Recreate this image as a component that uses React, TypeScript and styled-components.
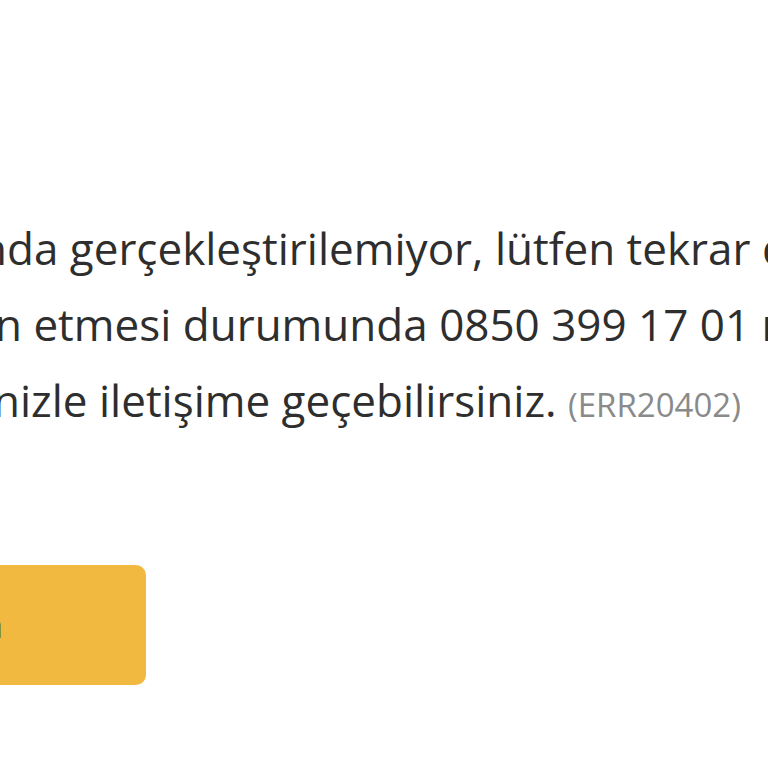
import React from "react";
import styled, { createGlobalStyle } from "styled-components";

const GlobalStyle = createGlobalStyle`
  html, body {
    margin: 0;
    padding: 0;
    background: #fff;
    overflow: hidden;
  }
  body {
    font-family: "Open Sans", "Noto Sans", sans-serif;
  }
`;

const Page = styled.div`
  width: 768px;
  height: 768px;
  overflow: hidden;
  display: flex;
  flex-direction: column;
  padding-top: 210px;
  box-sizing: border-box;
`;

const Message = styled.div`
  display: flex;
  flex-direction: column;
  color: #2e2e2e;
  font-size: 44px;
  line-height: 76px;
`;

const Line = styled.div<{ $shift: number }>`
  white-space: nowrap;
  margin-left: ${({ $shift }) => $shift}px;
`;

const Code = styled.span`
  color: #8a8a8a;
  font-size: 33px;
`;

const Actions = styled.div`
  display: flex;
  margin-top: 122px;
`;

const Button = styled.button`
  width: 346px;
  height: 120px;
  margin-left: -200px;
  border: none;
  border-radius: 10px;
  background: #f2b941;
  color: #4a3a1c;
  font-family: "Open Sans", "Noto Sans", sans-serif;
  font-size: 34px;
  font-weight: 600;
  display: flex;
  align-items: center;
  justify-content: flex-end;
  padding: 0 143px 0 0;
`;

export default function App() {
  return (
    <>
      <GlobalStyle />
      <Page>
        <Message>
          <Line $shift={-20}>nda gerçekleştirilemiyor, lütfen tekrar deneyiniz.</Line>
          <Line $shift={-5}>n etmesi durumunda 0850 399 17 01 numaralı</Line>
          <Line $shift={-7}>
            nizle iletişime geçebilirsiniz. <Code>(ERR20402)</Code>
          </Line>
        </Message>
        <Actions>
          <Button>Tamam</Button>
        </Actions>
      </Page>
    </>
  );
}
